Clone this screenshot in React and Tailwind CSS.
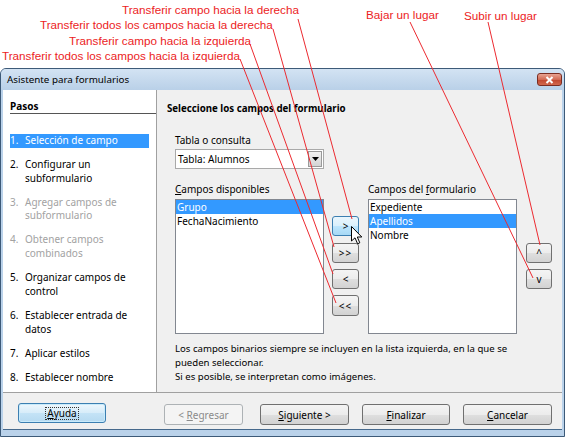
const ui = "font-['Noto_Sans',sans-serif]"

const btnNormal =
  'border-[#707070] bg-[linear-gradient(to_bottom,#f4f4f4_0%,#ececec_50%,#dfdfdf_51%,#d2d2d2_100%)] text-black'
const btnHover =
  'border-[#3c7fb1] bg-[linear-gradient(to_bottom,#eaf6fd_0%,#d9f0fc_50%,#bee6fd_51%,#a7d9f5_100%)] text-black'
const btnDisabled = 'border-[#adb2b5] bg-[#f4f4f4] text-[#8a8a8a]'

function Btn({ className = '', kind = 'normal', children }) {
  const look = kind === 'hover' ? btnHover : kind === 'disabled' ? btnDisabled : btnNormal
  return (
    <div
      className={`flex items-center justify-center rounded-[3px] border text-[10px] leading-none ${look} ${className}`}
    >
      {children}
    </div>
  )
}

const STEPS = [
  { n: '1.', lines: ['Selección de campo'], active: true },
  { n: '2.', lines: ['Configurar un', 'subformulario'] },
  { n: '3.', lines: ['Agregar campos de', 'subformulario'], off: true },
  { n: '4.', lines: ['Obtener campos', 'combinados'], off: true },
  { n: '5.', lines: ['Organizar campos de', 'control'] },
  { n: '6.', lines: ['Establecer entrada de', 'datos'] },
  { n: '7.', lines: ['Aplicar estilos'] },
  { n: '8.', lines: ['Establecer nombre'] },
]

const NOTES = [
  { text: 'Transferir campo hacia la derecha', x: 122, y: 3 },
  { text: 'Transferir todos los campos hacia la derecha', x: 40, y: 18 },
  { text: 'Transferir campo hacia la izquierda', x: 69, y: 34 },
  { text: 'Transferir todos los campos hacia la izquierda', x: 2, y: 49 },
  { text: 'Bajar un lugar', x: 366, y: 8 },
  { text: 'Subir un lugar', x: 464, y: 9 },
]

const LINES = [
  [298, 19, 352, 219],
  [273, 29, 334, 247],
  [250, 44, 333, 274],
  [240, 59, 336, 303],
  [410, 22, 533, 278],
  [488, 22, 540, 245],
]

function ListBox({ items, selected }) {
  return (
    <div className="mt-[3px] h-[135px] w-[149px] border border-[#828790] bg-white">
      {items.map((it, i) => (
        <div
          key={it}
          className={`h-[14px] pl-[1px] text-[10px] leading-[14px] ${
            i === selected ? 'bg-[#3399ff] text-white' : 'text-black'
          }`}
        >
          {it}
        </div>
      ))}
    </div>
  )
}

export default function App() {
  return (
    <div className={`relative h-[438px] w-[566px] overflow-hidden bg-white ${ui}`}>
      <div className="h-[68px]" />

      {/* window */}
      <div className="flex h-[369px] w-[565px] flex-col rounded-t-[6px] border border-[#3d5a78] bg-[#bad2ea]">
        <div className="flex h-[21px] items-center justify-between rounded-t-[5px] bg-[linear-gradient(to_bottom,#d3e3f3,#b9d0e8)] pl-[6px] pr-[2px]">
          <span className="text-[9.8px] leading-none text-black">Asistente para formularios</span>
          <div className="flex h-[13px] w-[25px] items-center justify-center rounded-[3px] border border-[#7a2d22] bg-[linear-gradient(to_bottom,#e8a493,#d26b55_50%,#c0452e_51%,#d2684c)]">
            <svg width="9" height="8" viewBox="0 0 9 8">
              <path d="M1.5 1 L7.5 7 M7.5 1 L1.5 7" stroke="#fff" strokeWidth="2" />
            </svg>
          </div>
        </div>

        <div className="mx-[2px] flex h-[340px] flex-col border-b border-[#46698c] bg-[#f0f0f0]">
          <div className="flex h-[302px]">
            {/* steps */}
            <div className="w-[154px] border-r border-[#a0a0a0] bg-white pt-[10px]">
              <div className="ml-[7px] border-b border-[#555] text-[10px] font-bold leading-[13px] text-black">
                Pasos
              </div>
              <div className="mt-[20px] flex flex-col gap-[10.3px] pl-[7px] pr-[7px]">
                {STEPS.map((s) => (
                  <div
                    key={s.n}
                    className={`flex text-[10px] leading-[13.7px] ${
                      s.active ? 'bg-[#3399ff] text-white' : s.off ? 'text-[#a2a2a2]' : 'text-black'
                    }`}
                  >
                    <span className="w-[15px] shrink-0">{s.n}</span>
                    <span>
                      {s.lines.map((l) => (
                        <div key={l} className="whitespace-nowrap">{l}</div>
                      ))}
                    </span>
                  </div>
                ))}
              </div>
            </div>

            {/* fields */}
            <div className="flex-1 pl-[10px] pt-[12px]">
              <div className="text-[9.7px] font-bold leading-[14px] text-black">
                Seleccione los campos del formulario
              </div>
              <div className="pl-[8px]">
                <div className="mt-[17px] text-[10px] leading-[14px] text-black">Tabla o consulta</div>
                <div className="mt-[2px] flex h-[20px] w-[149px] items-center justify-between border border-[#a9a9a9] bg-white pl-[2px] pr-[1px]">
                  <span className="text-[10px] text-black">Tabla: Alumnos</span>
                  <div className="flex h-[16px] w-[14px] items-center justify-center border border-[#9a9a9a] bg-[linear-gradient(to_bottom,#f2f2f2,#d4d4d4)]">
                    <svg width="7" height="4" viewBox="0 0 7 4">
                      <path d="M0 0 H7 L3.5 4 Z" fill="#000" />
                    </svg>
                  </div>
                </div>

                <div className="mt-[13px] flex items-start">
                  <div className="w-[149px]">
                    <div className="text-[10px] leading-[14px] text-black">
                      <span className="underline">C</span>ampos disponibles
                    </div>
                    <ListBox items={['Grupo', 'FechaNacimiento']} selected={0} />
                  </div>

                  <div className="ml-[8px] mt-[34px] flex w-[27px] flex-col">
                    <Btn kind="hover" className="h-[20px]">&gt;</Btn>
                    <Btn className="mt-[7px] h-[20px] tracking-[1px]">&gt;&gt;</Btn>
                    <Btn className="mt-[6px] h-[20px]">&lt;</Btn>
                    <Btn className="mt-[6px] h-[21px] tracking-[1px]">&lt;&lt;</Btn>
                  </div>

                  <div className="ml-[9px] w-[149px]">
                    <div className="text-[10px] leading-[14px] text-black">
                      Campos del <span className="underline">f</span>ormulario
                    </div>
                    <ListBox items={['Expediente', 'Apellidos', 'Nombre']} selected={1} />
                  </div>

                  <div className="ml-[9px] mt-[61px] flex w-[26px] flex-col">
                    <Btn className="h-[20px] text-[#555]">^</Btn>
                    <Btn className="mt-[6px] h-[20px] text-[#555]">v</Btn>
                  </div>
                </div>

                <div className="mt-[8px] text-[9.6px] leading-[14px] text-black">
                  Los campos binarios siempre se incluyen en la lista izquierda, en la que se
                  <br />
                  pueden seleccionar.
                  <br />
                  Si es posible, se interpretan como imágenes.
                </div>
              </div>
            </div>
          </div>

          {/* bottom bar */}
          <div className="flex flex-1 items-start border-t border-[#a0a0a0] pl-[15px] pt-[10px]">
            <div className="flex h-[20px] w-[88px] items-center justify-center rounded-[3px] border border-[#3c7fb1] bg-[linear-gradient(to_bottom,#eef7fd,#d6ecf9_50%,#c4e3f6_51%,#b6daf1)] shadow-[inset_0_0_0_1px_#c9ebfb]">
              <span className="border border-dotted border-[#333] px-[1px] text-[10px] leading-[11px] text-black">
                <span className="underline">A</span>yuda
              </span>
            </div>
            <Btn kind="disabled" className="ml-[58px] mt-[1px] h-[21px] w-[79px]">
              &lt;&nbsp;<span className="underline">R</span>egresar
            </Btn>
            <Btn className="ml-[17px] mt-[1px] h-[21px] w-[89px]">
              <span className="underline">S</span>iguiente &gt;
            </Btn>
            <Btn className="ml-[13px] mt-[1px] h-[21px] w-[88px]">
              <span className="underline">F</span>inalizar
            </Btn>
            <Btn className="ml-[13px] mt-[1px] h-[21px] w-[89px]">
              <span className="underline">C</span>ancelar
            </Btn>
          </div>
        </div>
      </div>

      {/* annotations */}
      {NOTES.map((n) => (
        <div
          key={n.text}
          className="absolute whitespace-nowrap font-['Liberation_Sans',Arial,sans-serif] text-[11.7px] leading-[14px] text-[#ec1c24]"
          style={{ left: n.x, top: n.y }}
        >
          {n.text}
        </div>
      ))}
      <svg className="pointer-events-none absolute left-0 top-0" width="566" height="438">
        {LINES.map(([x1, y1, x2, y2]) => (
          <line key={`${x1}-${y1}`} x1={x1} y1={y1} x2={x2} y2={y2} stroke="#ec2a30" strokeWidth="1" />
        ))}
      </svg>

      {/* mouse pointer */}
      <svg className="pointer-events-none absolute left-[351px] top-[226px]" width="12" height="19" viewBox="0 0 12 19">
        <path d="M0.5 0.5 L0.5 15 L4 11.8 L6.6 17.8 L8.8 16.8 L6.3 11 L10.8 11 Z" fill="#fff" stroke="#000" strokeWidth="1" />
      </svg>
    </div>
  )
}
